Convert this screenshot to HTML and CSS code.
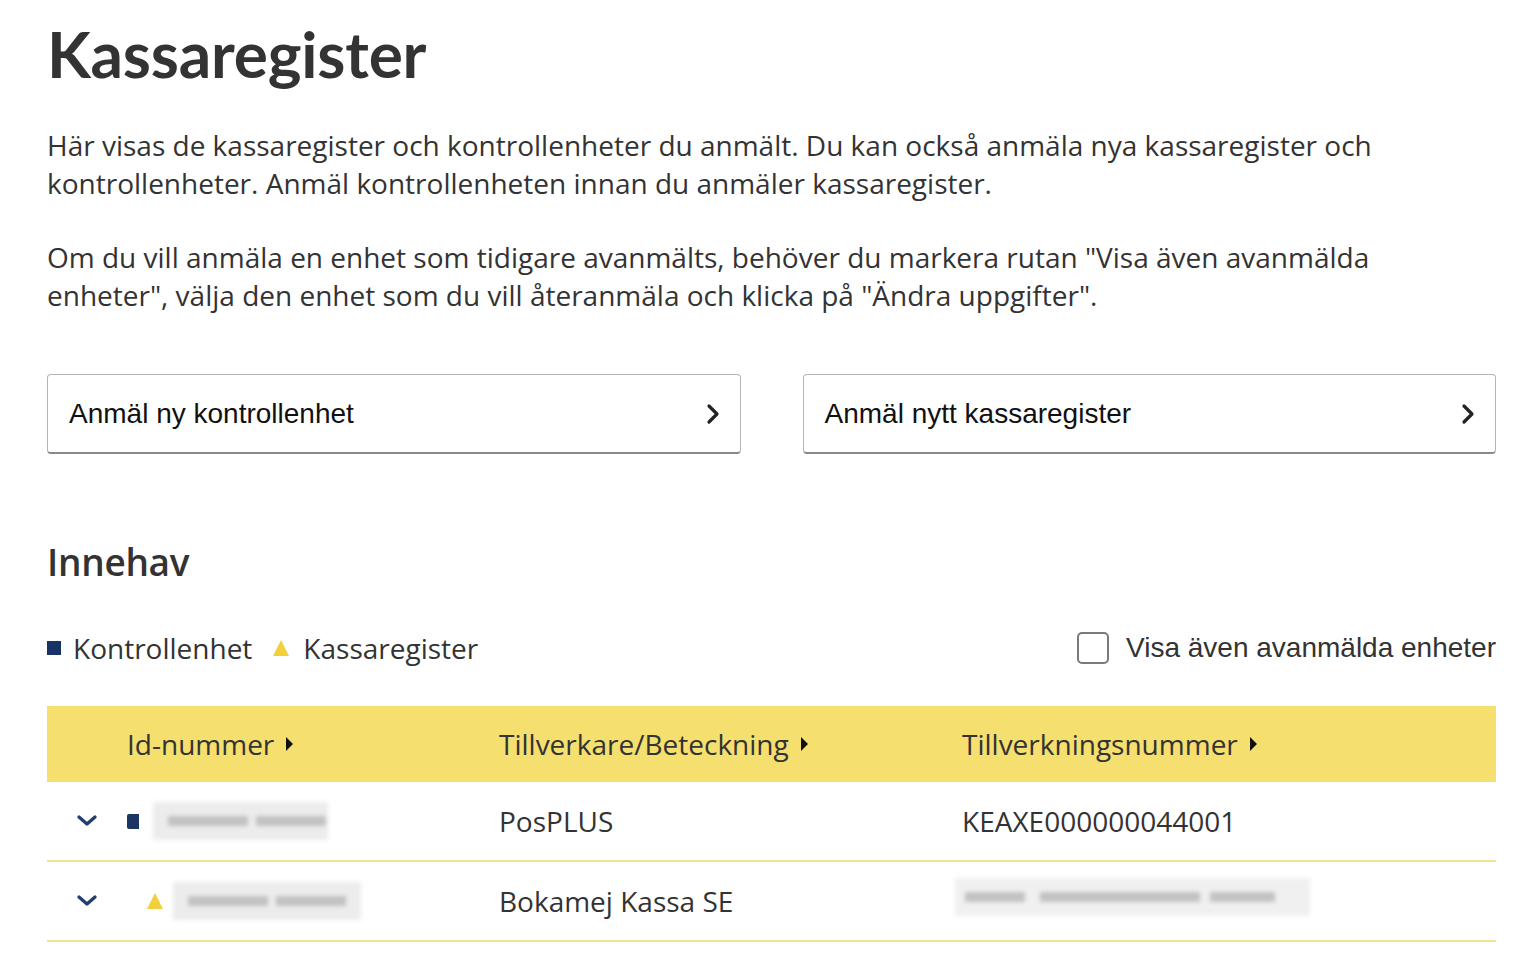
FILE: index.html
```html
<!DOCTYPE html>
<html lang="sv">
<head>
<meta charset="utf-8">
<title>Kassaregister</title>
<link rel="stylesheet" href="styles.css">
</head>
<body>
<main class="page">
  <h1 class="title">Kassaregister</h1>
  <p class="intro">Här visas de kassaregister och kontrollenheter du anmält. Du kan också anmäla nya kassaregister och kontrollenheter. Anmäl kontrollenheten innan du anmäler kassaregister.</p>
  <p class="intro">Om du vill anmäla en enhet som tidigare avanmälts, behöver du markera rutan "Visa även avanmälda enheter", välja den enhet som du vill återanmäla och klicka på "Ändra uppgifter".</p>

  <div class="actions">
    <a class="action" href="#"><span>Anmäl ny kontrollenhet</span>
      <svg class="chev" viewBox="0 0 14 22" width="14" height="22"><path d="M3 3l8 8-8 8" fill="none" stroke="#222" stroke-width="3.2" stroke-linecap="round" stroke-linejoin="round"/></svg></a>
    <a class="action" href="#"><span>Anmäl nytt kassaregister</span>
      <svg class="chev" viewBox="0 0 14 22" width="14" height="22"><path d="M3 3l8 8-8 8" fill="none" stroke="#222" stroke-width="3.2" stroke-linecap="round" stroke-linejoin="round"/></svg></a>
  </div>

  <h2 class="subtitle">Innehav</h2>

  <div class="legend-row">
    <div class="legend">
      <span class="sq"></span><span class="legend-label">Kontrollenhet</span>
      <span class="tri"></span><span class="legend-label">Kassaregister</span>
    </div>
    <label class="check"><span class="box"></span><span>Visa även avanmälda enheter</span></label>
  </div>

  <div class="table">
    <div class="row head">
      <div></div>
      <div class="th">Id-nummer <span class="sort"></span></div>
      <div class="th">Tillverkare/Beteckning <span class="sort"></span></div>
      <div class="th">Tillverkningsnummer <span class="sort"></span></div>
    </div>
    <div class="row">
      <div class="toggle"><svg viewBox="0 0 22 14" width="22" height="14"><path d="M3 3l8 7 8-7" fill="none" stroke="#243f6f" stroke-width="3.4" stroke-linecap="round" stroke-linejoin="round"/></svg></div>
      <div class="idcell"><span class="sq small"></span><span class="blur w175"><i class="b1"></i><i class="b2"></i></span></div>
      <div class="td">PosPLUS</div>
      <div class="td">KEAXE000000044001</div>
    </div>
    <div class="row">
      <div class="toggle"><svg viewBox="0 0 22 14" width="22" height="14"><path d="M3 3l8 7 8-7" fill="none" stroke="#243f6f" stroke-width="3.4" stroke-linecap="round" stroke-linejoin="round"/></svg></div>
      <div class="idcell child"><span class="tri small"></span><span class="blur w188"><i class="b1"></i><i class="b2"></i></span></div>
      <div class="td">Bokamej Kassa SE</div>
      <div class="td"><span class="blur w355 shift"><i class="b3"></i><i class="b4"></i><i class="b5"></i></span></div>
    </div>
  </div>
</main>
</body>
</html>
```

FILE: styles.css
```css
* { box-sizing: border-box; }
html, body { margin: 0; padding: 0; background: #fff; }
body {
  font-family: "Open Sans", "DejaVu Sans", sans-serif;
  color: #333;
}
.page {
  padding: 14px 44px 0 47px;
}
.title {
  font-family: Lato, "Liberation Sans", sans-serif;
  font-weight: 700;
  font-size: 64px;
  line-height: 80px;
  margin: 0 0 32px 0;
  color: #333;
  letter-spacing: -0.2px;
}
.intro {
  font-size: 28px;
  line-height: 38px;
  margin: 0 0 36px 0;
  letter-spacing: 0;
  max-width: 1420px;
}
.actions {
  display: grid;
  grid-template-columns: 1fr 1fr;
  column-gap: 62px;
  margin-top: 60px;
}
.action {
  display: flex;
  align-items: center;
  justify-content: space-between;
  height: 80px;
  padding: 0 20px 0 21px;
  border: 1px solid #b5b5b5;
  border-bottom: 2px solid #8a8a8a;
  border-radius: 4px;
  text-decoration: none;
  color: #111;
  font-family: "Liberation Sans", Arial, sans-serif;
  font-size: 28px;
}
.chev { display: block; }
.subtitle {
  font-size: 37px;
  font-weight: 600;
  line-height: 50px;
  margin: 83px 0 0 0;
  color: #333;
  letter-spacing: -0.3px;
}
.legend-row {
  display: flex;
  justify-content: space-between;
  align-items: center;
  margin-top: 41px;
  height: 40px;
}
.legend {
  display: flex;
  align-items: center;
  font-size: 28px;
}
.sq {
  display: inline-block;
  width: 14px;
  height: 14px;
  background: #1a3366;
  margin-right: 12px;
}
.tri {
  display: inline-block;
  width: 0; height: 0;
  border-left: 8px solid transparent;
  border-right: 8px solid transparent;
  border-bottom: 16px solid #f3cf3c;
  margin: 0 14px 0 21px;
}
.check {
  display: flex;
  align-items: center;
  font-family: "Liberation Sans", Arial, sans-serif;
  font-size: 28px;
  color: #333;
}
.box {
  width: 32px;
  height: 32px;
  border: 2px solid #7a7a7a;
  border-radius: 5px;
  margin-right: 17px;
}
.table { margin-top: 38px; }
.row {
  display: grid;
  grid-template-columns: 80px 372px 463px 1fr;
  align-items: center;
  height: 80px;
  border-bottom: 2px solid #f2e190;
  font-size: 28px;
}
.row.head {
  background: #f5df6f;
  height: 76px;
  border-bottom: none;
}
.th { display: flex; align-items: center; }
.sort {
  display: inline-block;
  width: 0; height: 0;
  border-top: 7px solid transparent;
  border-bottom: 7px solid transparent;
  border-left: 7px solid #111;
  margin-left: 12px;
}
.toggle {
  display: flex;
  justify-content: flex-start;
  padding-left: 29px;
}
.toggle svg { display: block; }
.idcell { display: flex; align-items: center; }
.sq.small { width: 12px; height: 15px; margin-right: 14px; background: #1b3565; border-radius: 2px 0 0 2px; }
.tri.small {
  border-left-width: 8px;
  border-right-width: 8px;
  border-bottom-width: 16px;
  margin: 0 10px 0 20px;
}
.blur {
  position: relative;
  display: inline-block;
  height: 38px;
  background: #ececec;
  filter: blur(2px);
  overflow: hidden;
}
.blur i {
  position: absolute;
  top: 14px;
  height: 10px;
  background: #c2c2c2;
}
.w175 { width: 175px; }
.w188 { width: 188px; }
.w355 { width: 355px; background: #f0f0f0; }
.shift { margin-left: -7px; }
.b1 { left: 15px; width: 80px; }
.b2 { left: 103px; width: 70px; }
.b3 { left: 10px; width: 60px; }
.b4 { left: 85px; width: 160px; }
.b5 { left: 255px; width: 65px; }
.td { white-space: nowrap; }
```
